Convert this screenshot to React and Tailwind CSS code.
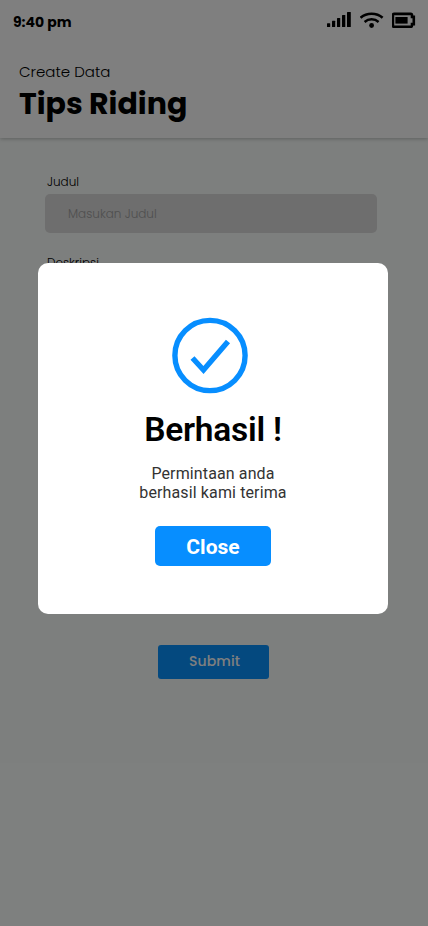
function SignalIcon() {
  return (
    <svg width="25" height="16" viewBox="0 0 25 16" fill="#000">
      <rect x="0" y="11.2" width="3.2" height="3.8" rx=".5" />
      <rect x="5" y="8.8" width="3.2" height="6.2" rx=".5" />
      <rect x="10" y="6" width="3.2" height="9" rx=".5" />
      <rect x="15" y="3" width="3.3" height="12" rx=".5" />
      <rect x="20" y="0" width="3.8" height="15" rx=".5" />
    </svg>
  );
}

function WifiIcon() {
  return (
    <svg width="24" height="16" viewBox="0 0 24 16" fill="none" stroke="#000">
      <path d="M.6 5.8C6.6 .4 16.6 .4 22.6 5.8" strokeWidth="2.6" />
      <path d="M4.6 10C8.6 6.4 14.6 6.4 18.6 10" strokeWidth="2.4" />
      <circle cx="11.6" cy="13.5" r="2.4" fill="#000" stroke="none" />
    </svg>
  );
}

function BatteryIcon() {
  return (
    <svg width="24" height="16" viewBox="0 0 24 16">
      <path d="M2.2 1.9H18.7Q20 1.9 20 3.2V4.9H21.8V12.1H20V13.5Q20 14.8 18.7 14.8H2.2Q.9 14.8 .9 13.5V3.2Q.9 1.9 2.2 1.9Z" fill="none" stroke="#000" strokeWidth="2.6" />
      <rect x="3.4" y="5" width="12.2" height="6.6" fill="#000" />
    </svg>
  );
}

export default function App() {
  return (
    <div className="relative h-[926px] w-[428px] overflow-hidden bg-[#fbfffd] font-['Poppins','Inter',sans-serif] text-black">
      <header className="h-[138px] bg-white shadow-[0_1px_4px_rgba(0,0,0,0.25)]">
        <div className="flex h-11 items-start justify-between pr-3 pl-[13px]">
          <span className="pt-[12px] text-[14px] leading-5 font-bold">9:40 pm</span>
          <div className="flex gap-[8px] pt-[12px]">
            <SignalIcon />
            <WifiIcon />
            <BatteryIcon />
          </div>
        </div>
        <div className="pt-[18px] pl-[19px]">
          <p className="text-[15px] leading-5 font-light">Create Data</p>
          <h1 className="mt-[2px] text-[30px] leading-[40px] font-bold">Tips Riding</h1>
        </div>
      </header>

      <main className="px-[45px] pt-[36px]">
        <label className="block pl-[2px] text-[12px] leading-4 font-light">Judul</label>
        <div className="mt-1 flex h-[39px] w-[332px] items-center rounded-[5px] bg-[#dcdcdc] pl-[23px] text-[12px] font-light text-[#a0a0a0]">Masukan Judul</div>
        <label className="mt-[22px] block pl-[2px] text-[12px] leading-4 font-light">Deskripsi</label>
        <div className="mt-1 h-[306px] rounded-[5px]" />
        <button className="mt-[64px] ml-[113px] flex h-[34px] w-[111px] items-center justify-center rounded-[3px] bg-[#0893ff] pb-px pl-[2px] text-[14px] font-medium tracking-[0.1px] text-white">Submit</button>
      </main>

      <div className="absolute inset-0 bg-black/50 pt-[263px] pl-[38px]">
        <section className="flex h-[351px] w-[350px] flex-col items-center rounded-[10px] bg-white pt-[54px] font-['Roboto',sans-serif]">
          <svg className="-ml-1.5" width="77" height="77" viewBox="0 0 77 77" fill="none" stroke="#078eff">
            <circle cx="38" cy="38.5" r="35.1" strokeWidth="5.4" />
            <path d="M20.5 41L31.5 53L56 24.5" strokeWidth="5.4" />
          </svg>
          <h2 className="mt-[15px] text-[33.5px] leading-[42px] font-semibold tracking-[-0.25px]">Berhasil !</h2>
          <p className="mt-[13px] text-center text-[16px] leading-[19px] tracking-[0.12px] text-[#333]">
            Permintaan anda
            <br />
            berhasil kami terima
          </p>
          <button className="mt-[24px] flex h-[40px] w-[116px] items-center justify-center rounded-[5px] bg-[#078eff] pt-[3px] text-[21px] font-bold text-white">Close</button>
        </section>
      </div>
    </div>
  );
}
